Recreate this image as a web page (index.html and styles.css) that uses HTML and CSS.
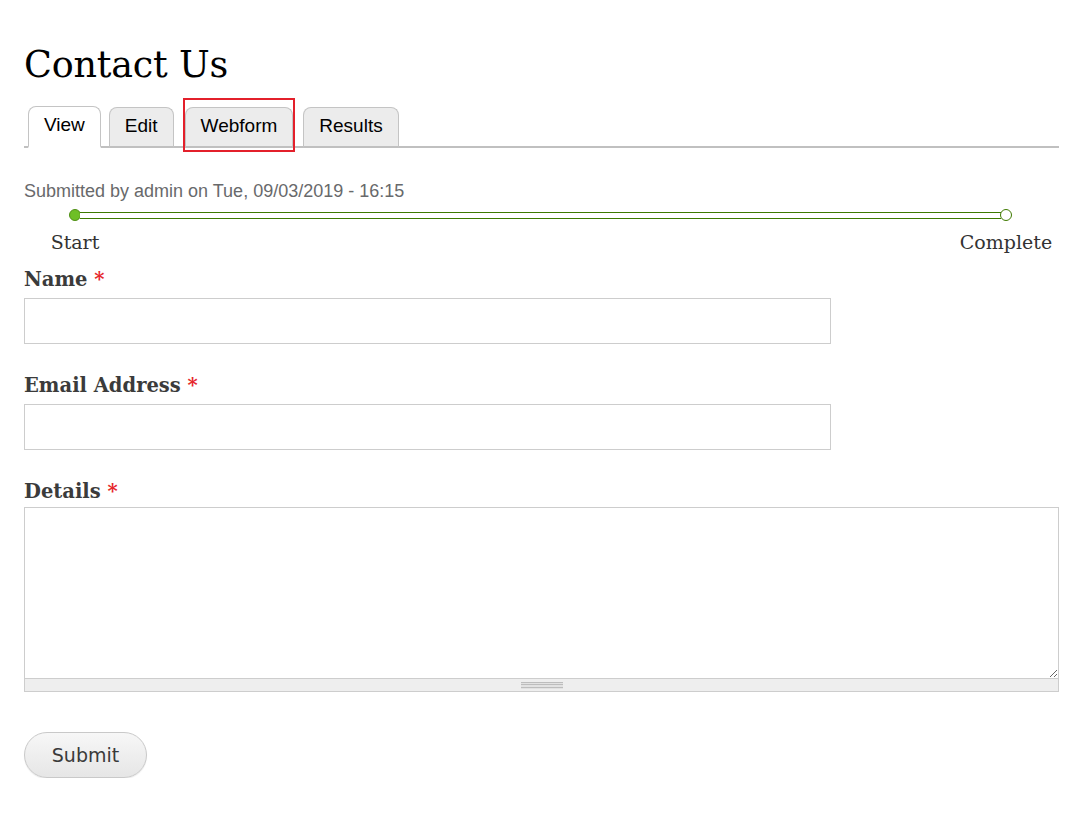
FILE: index.html
```html
<!DOCTYPE html>
<html>
<head>
<meta charset="utf-8">
<title>Contact Us</title>
<link rel="stylesheet" href="styles.css">
</head>
<body>
<main class="page">
  <h1 class="title">Contact Us</h1>
  <ul class="tabs">
    <li class="tab active"><a href="#">View</a></li>
    <li class="tab"><a href="#">Edit</a></li>
    <li class="tab marked"><a href="#">Webform</a><span class="highlight"></span></li>
    <li class="tab"><a href="#">Results</a></li>
  </ul>
  <p class="submitted">Submitted by admin on Tue, 09/03/2019 - 16:15</p>
  <div class="progress">
    <div class="track"><span class="dot done"></span><span class="line"></span><span class="dot"></span></div>
    <div class="steps"><span>Start</span><span>Complete</span></div>
  </div>
  <form class="form">
    <div class="field">
      <label class="label">Name <span class="req">*</span></label>
      <input class="text" type="text">
    </div>
    <div class="field">
      <label class="label">Email Address <span class="req">*</span></label>
      <input class="text" type="email">
    </div>
    <div class="field field-area">
      <label class="label">Details <span class="req">*</span></label>
      <textarea class="area"></textarea>
      <div class="grippie"><span class="grip"></span></div>
    </div>
    <button class="submit" type="button">Submit</button>
  </form>
</main>
</body>
</html>
```
FILE: styles.css
```css
* { box-sizing: border-box; }
body { margin: 0; background: #fff; color: #3b3b3b; }
.page { padding: 0 21px 0 24px; }
.title {
  margin: 0; padding-top: 41px;
  font-family: "DejaVu Serif", serif; font-weight: normal;
  font-size: 36.5px; line-height: 48px; color: #000; letter-spacing: -0.2px;
}
.tabs {
  list-style: none; margin: 17px 0 0; padding: 0 0 0 4px;
  display: flex; align-items: flex-end; gap: 8px;
  border-bottom: 2px solid #c0c0c0; height: 42px;
}
.tab { position: relative; margin-bottom: -2px; }
.tab a {
  display: block; padding: 0 15px; height: 41px; line-height: 36px;
  font-family: "Liberation Sans", Arial, sans-serif; font-size: 19px; color: #000;
  text-decoration: none; background: #ececec;
  border: 1px solid #c4c4c4; border-bottom: 2px solid #c0c0c0; border-radius: 8px 8px 0 0;
}
.tab.active a { background: #fff; height: 42px; border-bottom: 2px solid #fff; }
.tab.marked { margin-left: 3px; margin-right: 2px; }
.highlight {
  position: absolute; left: -2px; right: -2px; top: -9px; bottom: -4px;
  border: 2px solid #e3202b;
}
.submitted {
  margin: 33px 0 0; font-family: "Liberation Sans", Arial, sans-serif;
  font-size: 18px; line-height: 20px; color: #68696b;
}
.progress { margin-top: 8px; }
.track { display: flex; align-items: center; margin: 0 47px 0 45px; height: 12px; }
.dot {
  width: 12px; height: 12px; border-radius: 50%; flex: none;
  border: 1px solid #3e7a00; background: #fff;
}
.dot.done { background: #6ebf26; border-color: #4f8f14; }
.line { flex: 1; height: 7px; border-top: 1px solid #3e7a00; border-bottom: 1px solid #3e7a00; background: #fff; margin: 0 -1px; }
.steps {
  display: flex; justify-content: space-between; padding: 0 3px 0 1px; margin-top: 9px;
  font-family: "DejaVu Serif", serif; font-size: 19px; line-height: 24px; color: #333;
}
.steps span { width: 100px; text-align: center; }
.form { margin-top: 14px; }
.field { display: flex; flex-direction: column; align-items: flex-start; margin-bottom: 30px; }
.label {
  font-family: "DejaVu Serif", serif; font-weight: bold; font-size: 19.5px; line-height: 24px;
  color: #3b3b3b; margin-bottom: 6px;
}
.req { color: #e6262c; }
.text { width: 807px; height: 46px; border: 1px solid #cdcdcd; background: #fff; margin: 0; }
.field-area { margin-bottom: 40px; }
.field-area .label { margin-bottom: 3px; }
.area {
  display: block; width: 100%; height: 171px; border: 1px solid #cdcdcd; margin: 0;
  resize: vertical; background: #fff; border-bottom: none;
}
.grippie {
  width: 100%; height: 14px; background: #eeeeee;
  border: 1px solid #cdcdcd; display: flex; justify-content: center; align-items: center;
}
.grip {
  width: 42px; height: 7px;
  background: repeating-linear-gradient(#bdbdbd 0 1px, #e2e2e2 1px 2.5px);
}
.submit {
  width: 123px; height: 46px; border-radius: 23px;
  border: 1px solid #c9c9c9; background: linear-gradient(#f7f7f7, #e6e6e6);
  font-family: "DejaVu Sans", sans-serif; font-size: 19px; color: #3a3a3a;
  box-shadow: 0 1px 1px rgba(0,0,0,0.08); padding: 0;
}
```
